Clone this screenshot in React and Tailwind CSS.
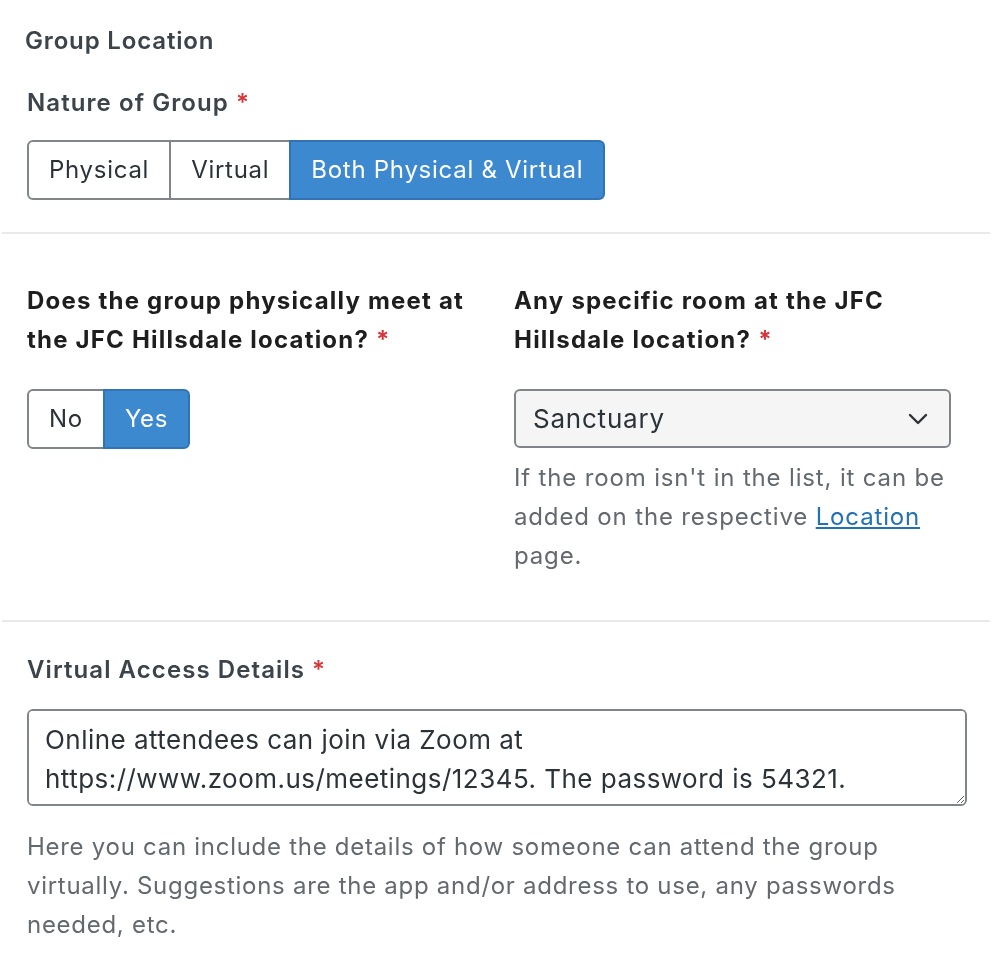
import { ChevronDown } from 'lucide-react';

const Req = () => <span className="text-[#d63638] ml-[7px]">*</span>;

const SegButton = ({ label, active, first, last }) => (
    <button
        type="button"
        className={
            'h-full px-[20px] text-[24px] tracking-[0.03em] border-2 ' +
            (active
                ? 'bg-[#3d89d0] text-white border-[#3274b3] '
                : 'bg-white text-[#2c3338] border-[#80858c] ') +
            (first ? 'rounded-l-[6px] ' : '-ml-[2px] ') +
            (last ? 'rounded-r-[6px]' : '')
        }
    >
        {label}
    </button>
);

const App = () => {
    return (
        <div className="min-h-screen bg-white font-['Inter','Noto_Sans',sans-serif] text-[#3c434a]">
            {/* Nature of Group */}
            <div className="px-[27px] pt-[25px] pb-[32px]">
                <h2 className="-ml-[2px] text-[24px] leading-[32px] font-semibold tracking-[0.035em] text-[#3c434a]">Group Location</h2>
                <label className="block mt-[28px] text-[24px] leading-[36px] font-semibold tracking-[0.045em]">
                    Nature of Group<Req />
                </label>
                <div className="flex h-[60px] mt-[19px]">
                    <SegButton label="Physical" first />
                    <SegButton label="Virtual" />
                    <SegButton label="Both Physical & Virtual" active last />
                </div>
            </div>

            <div className="mx-[2px] border-t-2 border-[#e8e8ed]" />

            {/* Physical location */}
            <div className="px-[27px] pt-[47px] pb-[45px] grid grid-cols-[450px_437px] gap-x-[37px]">
                <div>
                    <label className="block text-[24px] leading-[39px] font-bold tracking-[0.05em] text-[#1e1e1e]">
                        Does the group physically meet at the JFC Hillsdale location?<Req />
                    </label>
                    <div className="flex h-[60px] mt-[30px]">
                        <SegButton label="No" first />
                        <SegButton label="Yes" active last />
                    </div>
                </div>
                <div>
                    <label className="block text-[24px] leading-[39px] font-bold tracking-[0.05em] text-[#1e1e1e]">
                        Any specific room at the JFC Hillsdale location?<Req />
                    </label>
                    <div className="mt-[30px] h-[59px] flex items-center justify-between pl-[17px] pr-[15px] bg-[#f5f5f5] border-2 border-[#80858c] rounded-[6px] text-[26px] tracking-[0.03em] text-[#2c3338]">
                        <span>Sanctuary</span>
                        <ChevronDown className="w-[32px] h-[32px] text-[#2c3338]" strokeWidth={1.8} />
                    </div>
                    <p className="mt-[10px] text-[24px] leading-[39px] tracking-[0.035em] text-[#646970]">
                        If the room isn't in the list, it can be added on the respective{' '}
                        <a href="#" className="text-[#2271b1] underline">Location</a> page.
                    </p>
                </div>
            </div>

            <div className="mx-[2px] border-t-2 border-[#e8e8ed]" />

            {/* Virtual details */}
            <div className="px-[27px] pt-[30px] pb-[30px]">
                <label className="block text-[24px] leading-[36px] font-semibold tracking-[0.045em]">
                    Virtual Access Details<Req />
                </label>
                <textarea
                    readOnly
                    rows={2}
                    defaultValue="Online attendees can join via Zoom at https://www.zoom.us/meetings/12345. The password is 54321."
                    className="block w-[940px] h-[97px] mt-[21px] px-[16px] py-[9px] text-[26px] leading-[39px] tracking-[0.018em] text-[#2c3338] bg-white border-2 border-[#80858c] rounded-[6px] outline-none"
                />
                <p className="mt-[21px] text-[24px] leading-[39px] tracking-[0.03em] text-[#646970]">
                    Here you can include the details of how someone can attend the group virtually. Suggestions are the app and/or address to use, any passwords needed, etc.
                </p>
            </div>
        </div>
    );
};

export default App;
